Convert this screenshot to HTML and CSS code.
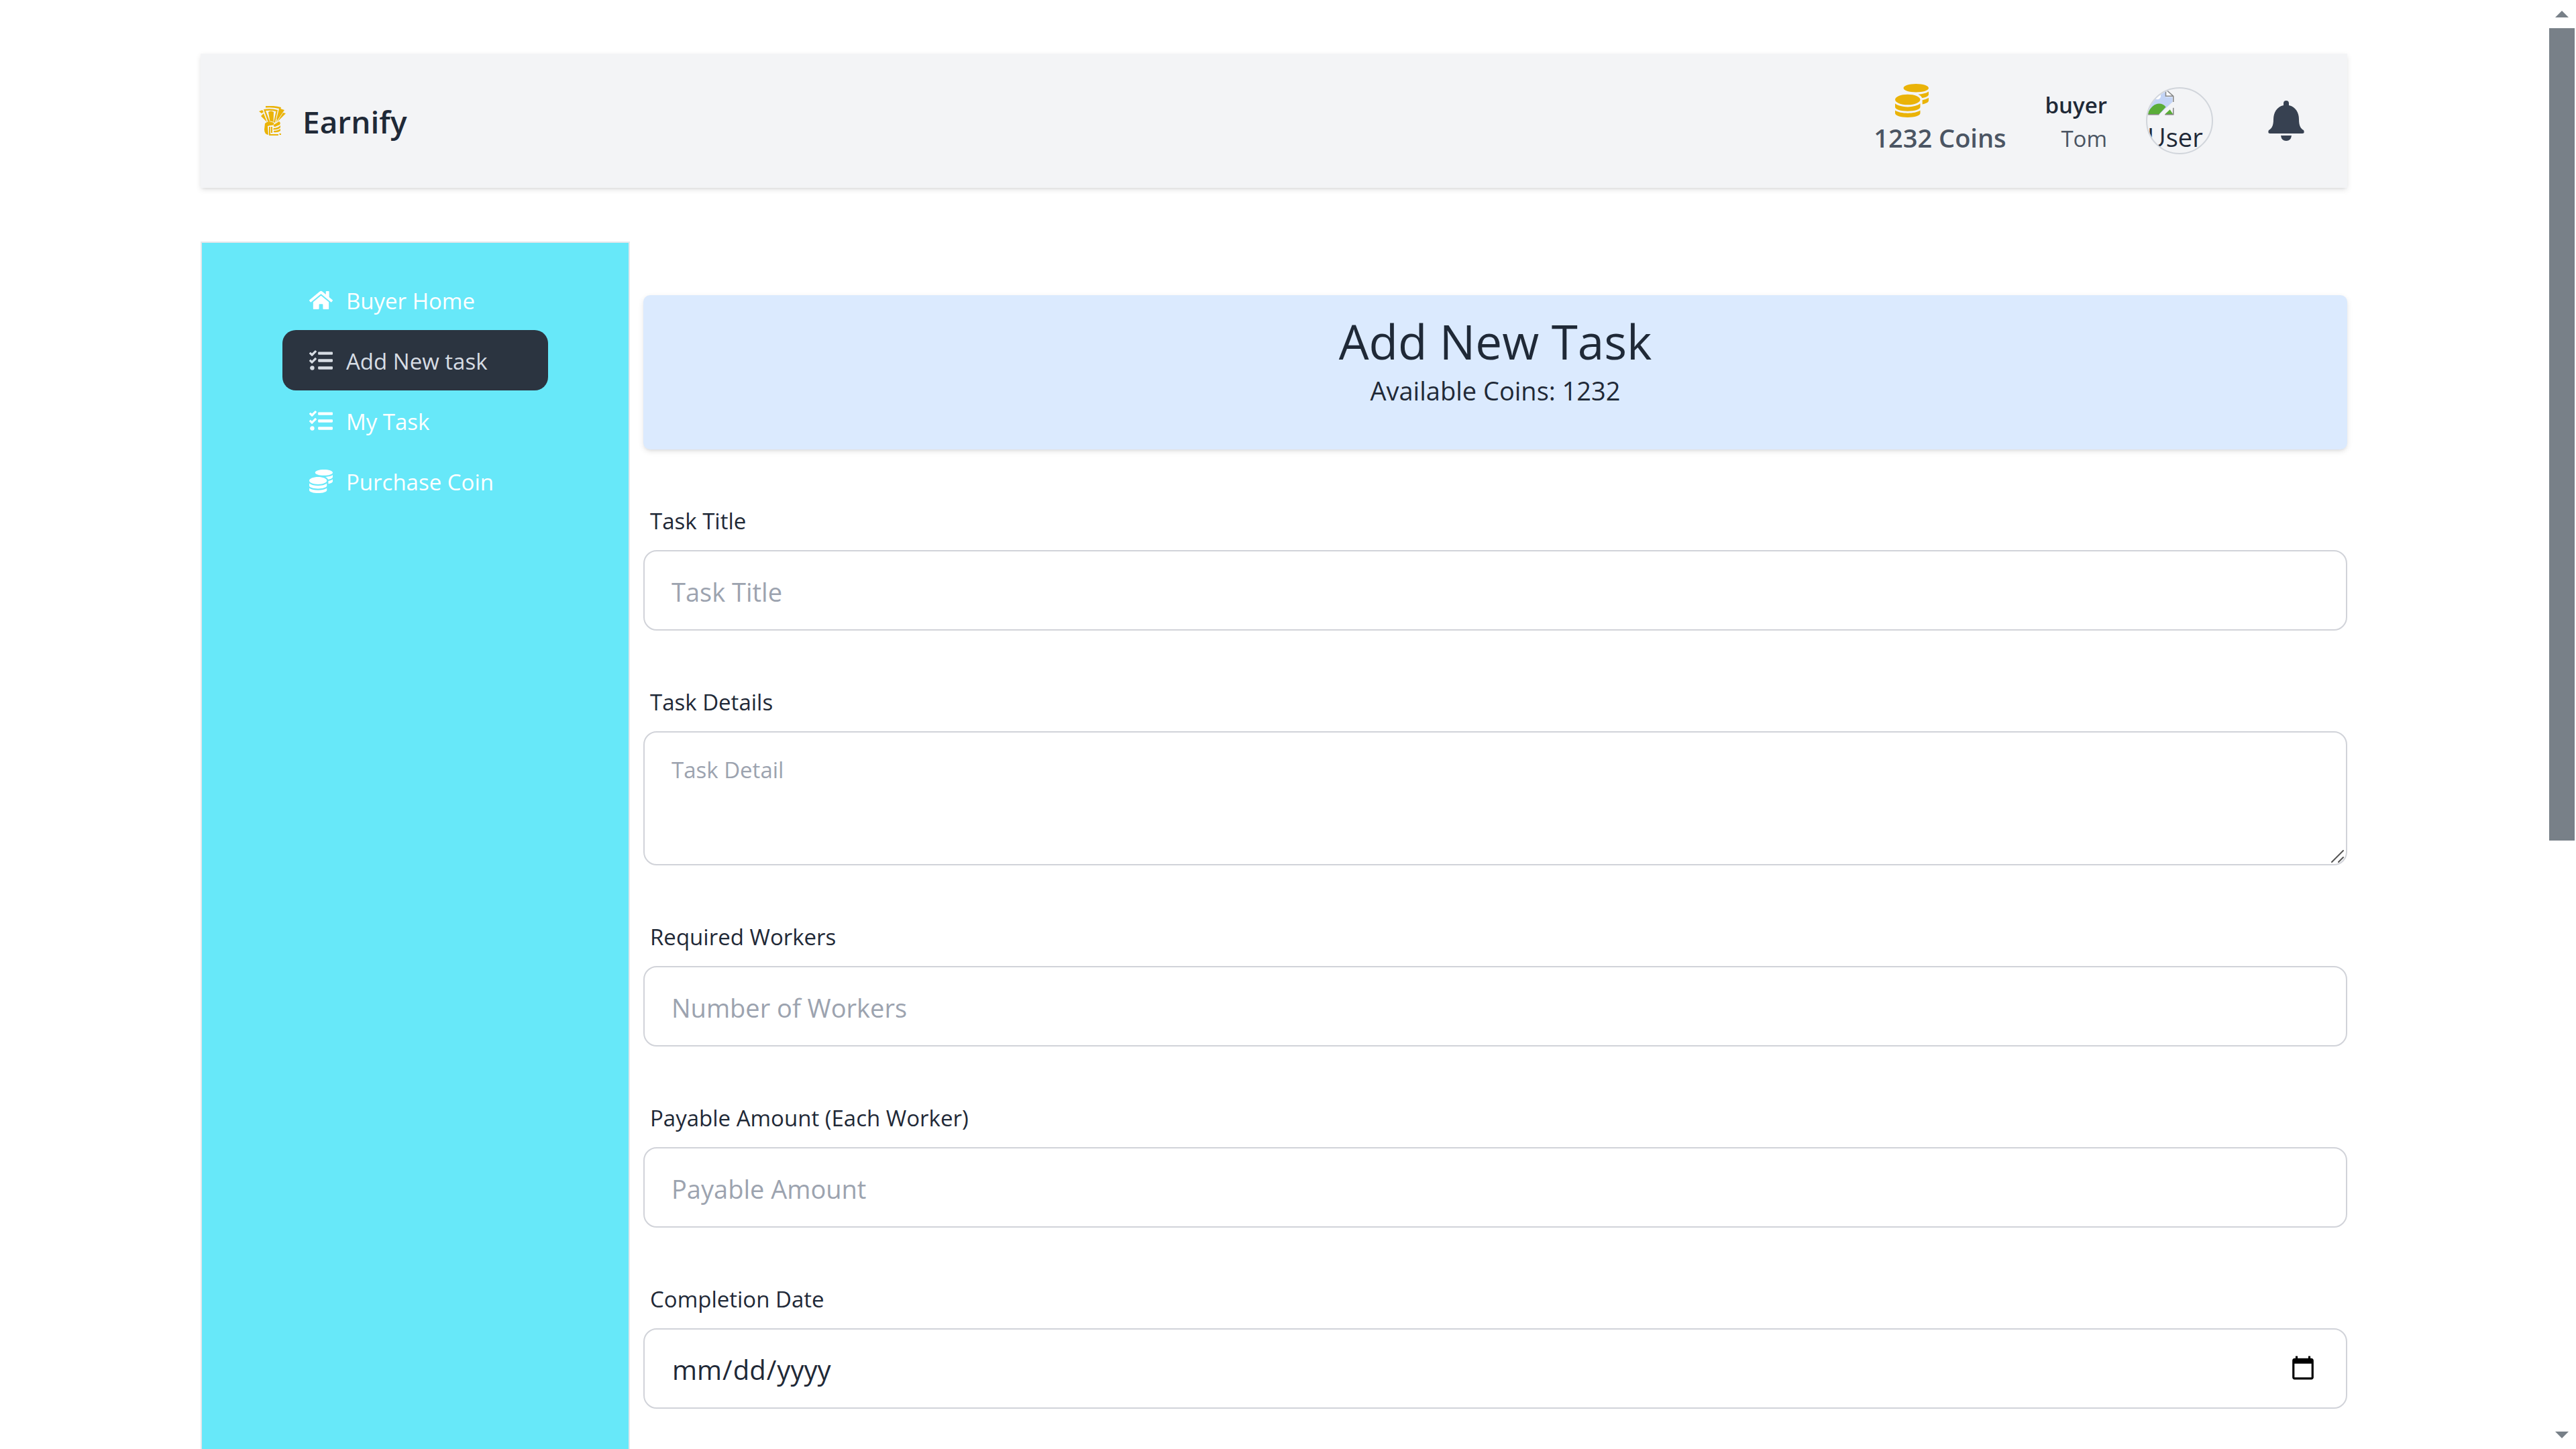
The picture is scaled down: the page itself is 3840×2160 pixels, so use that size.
FILE: index.html
```html
<!DOCTYPE html>
<html lang="en">
<head>
<meta charset="utf-8">
<title>Earnify</title>
<link rel="stylesheet" href="styles.css">
</head>
<body>
<svg class="defs" aria-hidden="true">
  <symbol id="coins" viewBox="0 0 512 512"><path d="M0 405.3V448c0 35.3 86 64 192 64s192-28.7 192-64v-42.7C342.7 434.4 267.2 448 192 448S41.3 434.4 0 405.3zM320 128c106 0 192-28.7 192-64S426 0 320 0 128 28.7 128 64s86 64 192 64zM0 300.4V352c0 35.3 86 64 192 64s192-28.7 192-64v-51.6c-41.3 34-116.9 51.6-192 51.6S41.3 334.4 0 300.4zm416 11c57.3-11.1 96-31.7 96-55.4v-42.7c-23.2 16.4-57.3 27.6-96 34.5v63.6zM192 160C86 160 0 195.8 0 240s86 80 192 80 192-35.8 192-80-86-80-192-80zm219.3 56.3c60-10.8 100.7-32 100.7-56.3v-42.7c-35.5 25.1-96.5 38.6-160.7 41.8 29.5 14.3 51.2 33.5 60 57.2z"/></symbol>
  <symbol id="tasks" viewBox="0 0 512 512"><path d="M139.61 35.5a12 12 0 0 0-17 0L58.93 98.81l-22.7-22.12a12 12 0 0 0-17 0L3.53 92.41a12 12 0 0 0 0 17l47.59 47.4a12.78 12.78 0 0 0 17.61 0l15.59-15.62L156.52 69a12.09 12.09 0 0 0 .09-17zm0 159.19a12 12 0 0 0-17 0l-63.68 63.72-22.7-22.1a12 12 0 0 0-17 0L3.53 252a12 12 0 0 0 0 17L51 316.5a12.77 12.77 0 0 0 17.6 0l15.7-15.69 72.2-72.22a12 12 0 0 0 .09-16.9zM64 368c-26.49 0-48.59 21.5-48.59 48S37.53 464 64 464a48 48 0 0 0 0-96zm432 16H208a16 16 0 0 0-16 16v32a16 16 0 0 0 16 16h288a16 16 0 0 0 16-16v-32a16 16 0 0 0-16-16zm0-320H208a16 16 0 0 0-16 16v32a16 16 0 0 0 16 16h288a16 16 0 0 0 16-16V80a16 16 0 0 0-16-16zm0 160H208a16 16 0 0 0-16 16v32a16 16 0 0 0 16 16h288a16 16 0 0 0 16-16v-32a16 16 0 0 0-16-16z"/></symbol>
</svg>
<div class="window">
  <div class="page">
    <div class="container">
      <header class="navbar">
        <a class="brand" href="#">
          <svg class="brand-icon" viewBox="0 0 40 44" fill="currentColor">
            <path d="M10 0Q22 -1 33 2L28 19L26 20L30 4Q20 1.500 10 2.500Z"/>
            <path d="M7 5Q18 3 28 6L24 25L22 24L25.500 8Q18 6 10 7L16 23L13.500 24Z"/>
            <path d="M14 9Q18 6 22 9L21.500 24Q18 22 16.500 23Z"/>
            <path d="M0 8L5 6L7 9L4 11ZM3 15L7 11L12 24ZM32 4L38 6L25 25ZM27 24L36 10L40 11Z"/>
            <path d="M9 26Q14 21 22 25Q24 29 17 29L13 30L14 43Q8 42 8 35Z"/>
            <path d="M15 31H17V42H29V44H15ZM18 31H20V40H18ZM22 28L30 23Q33 25 31 28L24 31Q21 31 22 28ZM22 33Q28 33 32 29V32Q28 36 21 35ZM22 37Q28 37 32 34V37Q28 40 22 39ZM30 41H33V43H31Z"/>
          </svg>
          <span>Earnify</span>
        </a>
        <div class="account">
          <div class="coins">
            <svg class="coins-icon"><use href="#coins"/></svg>
            <span>1232 Coins</span>
          </div>
          <div class="user">
            <strong>buyer</strong>
            <span>Tom</span>
          </div>
          <div class="avatar">
            <svg class="avatar-icon" viewBox="0 0 16 16">
              <path d="M1 1H11L15 5V8L7.500 15H1Z" fill="#c3d4f6"/>
              <path d="M11 1V5H15Z" fill="#fff"/>
              <circle cx="6" cy="4.500" r="2" fill="#fff"/>
              <path d="M0 15Q3 9 7 9Q9.500 9 11 11L7 15.300H0ZM10.500 15.300L13.500 12.500L15.300 15.300Z" fill="#5aad38"/>
              <path d="M11 .5V4.500H15.500M11 .5L15.500 4.500V8M15.500 11.500V15.500H10.500M7 15.500H.5" fill="none" stroke="#858585" stroke-width=".6"/>
            </svg>
            <span>User</span>
          </div>
          <button class="bell" type="button" aria-label="Notifications">
            <svg viewBox="0 0 54 60" fill="currentColor"><path d="M27 0a4 4 0 0 0-4 4v3C13 9 8 18 8 28C8 38 5 42 1 44Q-1 49 3 49H51Q55 49 53 44C49 42 46 38 46 28C46 18 41 9 31 7V4a4 4 0 0 0-4-4ZM19 52H35Q34 60 27 60T19 52Z"/></svg>
          </button>
        </div>
      </header>
      <div class="columns">
        <nav class="sidebar">
          <a class="item" href="#"><svg viewBox="0 0 576 512"><path d="M280.370 148.260L96 300.110V464a16 16 0 0 0 16 16l112.060-.29a16 16 0 0 0 15.920-16V368a16 16 0 0 1 16-16h64a16 16 0 0 1 16 16v95.640a16 16 0 0 0 16 16.050L464 480a16 16 0 0 0 16-16V300L295.670 148.260a12.190 12.190 0 0 0-15.300 0zM571.600 251.470L488 182.560V44.050a12 12 0 0 0-12-12h-56a12 12 0 0 0-12 12v72.610L318.470 43a48 48 0 0 0-61 0L4.340 251.470a12 12 0 0 0-1.600 16.900l25.500 31A12 12 0 0 0 45.150 301l235.220-193.740a12.190 12.190 0 0 1 15.300 0L530.900 301a12 12 0 0 0 16.900-1.600l25.500-31a12 12 0 0 0-1.700-16.930z"/></svg><span>Buyer Home</span></a>
          <a class="item active" href="#"><svg><use href="#tasks"/></svg><span>Add New task</span></a>
          <a class="item" href="#"><svg><use href="#tasks"/></svg><span>My Task</span></a>
          <a class="item" href="#"><svg><use href="#coins"/></svg><span>Purchase Coin</span></a>
        </nav>
        <main class="content">
          <section class="banner">
            <h1>Add New Task</h1>
            <p>Available Coins: 1232</p>
          </section>
          <form class="form">
            <div class="field"><label for="title">Task Title</label><input id="title" type="text" placeholder="Task Title"></div>
            <div class="field"><label for="details">Task Details</label><div class="area"><textarea id="details" placeholder="Task Detail"></textarea><svg class="grip" viewBox="0 0 20 20"><path d="M1 19L18 2M11 19L18 12" fill="none" stroke="#555" stroke-width="2" stroke-linecap="round"/></svg></div></div>
            <div class="field"><label for="workers">Required Workers</label><input id="workers" type="number" placeholder="Number of Workers"></div>
            <div class="field"><label for="amount">Payable Amount (Each Worker)</label><input id="amount" type="number" placeholder="Payable Amount"></div>
            <div class="field"><label for="date">Completion Date</label><input id="date" type="date"></div>
          </form>
        </main>
      </div>
    </div>
  </div>
  <div class="scrollbar" aria-hidden="true">
    <span class="arrow up"></span>
    <span class="track"><span class="thumb"></span></span>
    <span class="arrow down"></span>
  </div>
</div>
</body>
</html>
```
FILE: styles.css
```css
* { box-sizing: border-box; margin: 0; }

body {
  font-family: "Open Sans", "Noto Sans", sans-serif;
  font-size: 38px;
  line-height: 60px;
  color: #1f2937;
  background: #fff;
}

.defs { display: none; }

.window { display: flex; height: 100vh; }

.page {
  flex: 1;
  min-width: 0;
  overflow: hidden auto;
  scrollbar-width: none;
}

.container {
  max-width: 3200px;
  margin: 0 auto;
  padding-top: 80px;
}

.navbar {
  display: flex;
  align-items: center;
  justify-content: space-between;
  height: 200px;
  padding: 0 64px 0 86px;
  background: #f3f4f6;
  box-shadow: 0 3px 8px rgb(0 0 0 / 10%), 0 3px 5px -3px rgb(0 0 0 / 10%);
}

.brand {
  display: flex;
  align-items: center;
  gap: 24px;
  color: #1f2937;
  font-size: 46px;
  font-weight: 600;
  text-decoration: none;
}
.brand span { padding-top: 2px; }

.brand-icon { width: 42px; height: 44px; color: #eab308; }

.account { display: flex; align-items: center; gap: 58px; }

.coins { color: #4b5563; font-weight: 600; }
.coins svg { display: block; width: 50px; height: 50px; margin-left: 32px; fill: #eab308; }

.user {
  display: flex;
  flex-direction: column;
  align-items: flex-end;
  padding-top: 4px;
  font-size: 33px;
  line-height: 50px;
}
.user strong { font-weight: 600; }
.user span { color: #4b5563; }

.avatar {
  width: 100px;
  height: 100px;
  overflow: hidden;
  border: 2px solid #d1d5db;
  border-radius: 50%;
  line-height: 64px;
}
.avatar svg { display: block; width: 40px; height: 40px; }

.bell {
  display: flex;
  margin-left: 24px;
  padding: 0;
  border: 0;
  background: none;
  color: #374151;
}
.bell svg { width: 54px; height: 60px; }

.columns { display: flex; gap: 20px; margin-top: 80px; }

.sidebar {
  flex: 0 0 20%;
  min-height: 100vh;
  padding: 40px 120px;
  border: 2px solid #e5e7eb;
  background: #67e8f9;
}

.item {
  display: flex;
  align-items: center;
  gap: 20px;
  height: 90px;
  padding: 0 40px;
  border-radius: 20px;
  color: #fff;
  font-size: 33px;
  text-decoration: none;
  white-space: nowrap;
}
.item span { padding-top: 4px; }
.item svg { width: 35px; height: 35px; fill: currentColor; }
.item.active { background: #2b3440; color: #d7dde4; }

.content { flex: 1; min-width: 0; padding-top: 80px; }

.banner {
  height: 230px;
  padding-top: 24px;
  border-radius: 10px;
  background: #dbeafe;
  text-align: center;
  box-shadow: 0 3px 8px rgb(0 0 0 / 10%), 0 3px 5px -3px rgb(0 0 0 / 10%);
}
.banner h1 { font-size: 71px; font-weight: 400; line-height: 90px; }
.banner p { line-height: 56px; }

.form { display: flex; flex-direction: column; gap: 60px; padding-top: 60px; }
.field { display: flex; flex-direction: column; }
.field label { height: 90px; padding: 4px 10px 0; font-size: 33px; line-height: 86px; }

.field input, .field textarea {
  display: block;
  width: 100%;
  height: 120px;
  padding: 4px 40px 0;
  border: 2px solid #d1d3d9;
  border-radius: 20px;
  background: #fff;
  color: #1f2937;
  font: inherit;
  appearance: none;
}
.field input[type="date"] { padding-right: 44px; font-size: 40px; }
.field textarea {
  height: 200px;
  padding: 26px 40px;
  font-size: 33px;
  line-height: 60px;
  resize: none;
}
.field ::placeholder { color: #9ca3af; opacity: 1; }
.field ::-webkit-calendar-picker-indicator { width: 40px; height: 40px; margin-bottom: 4px; padding: 0; }

.area { position: relative; }
.grip { position: absolute; right: 4px; bottom: 4px; width: 20px; height: 20px; }

.scrollbar { display: flex; flex-direction: column; width: 42px; padding: 0 2px; }
.track { flex: 1; }
.thumb { display: block; height: calc(100% * 7 / 12); background: #788088; }
.arrow { height: 42px; }
.arrow::before { content: ""; display: block; width: 20px; height: 10px; margin: 16px auto; background: #788088; }
.up::before { clip-path: polygon(50% 0, 100% 100%, 0 100%); }
.down::before { clip-path: polygon(0 0, 100% 0, 50% 100%); }
```
